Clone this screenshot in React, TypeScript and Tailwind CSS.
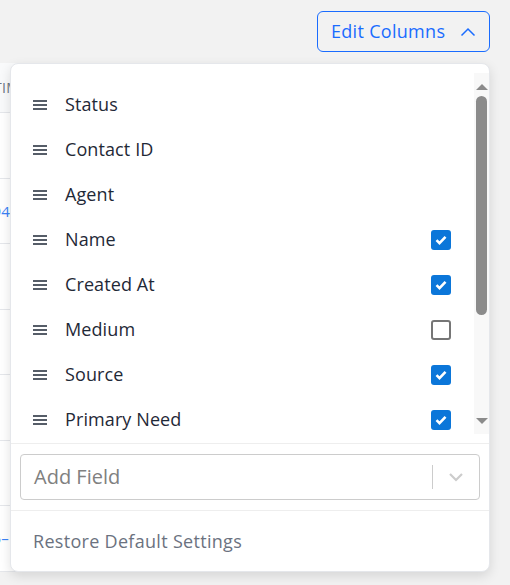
import { useState } from "react";

const columns = [
  { id: 1, title: "Status", checked: null },
  { id: 2, title: "Contact ID", checked: null },
  { id: 3, title: "Agent", checked: null },
  { id: 4, title: "Name", checked: true },
  { id: 5, title: "Created At", checked: true },
  { id: 6, title: "Medium", checked: false },
  { id: 7, title: "Source", checked: true },
  { id: 8, title: "Primary Need", checked: true },
  { id: 9, title: "Secondary Need", checked: false },
  { id: 10, title: "Phone", checked: true },
  { id: 11, title: "Email", checked: true },
  { id: 12, title: "Tags", checked: false },
];

const font = { fontFamily: "'Open Sans', 'Noto Sans', sans-serif" };

const DragIcon = () => (
  <svg width="16" height="12" viewBox="0 0 16 12" className="shrink-0">
    <path d="M1 2h14M1 6h14M1 10h14" stroke="#1f2937" strokeWidth="1.6" />
  </svg>
);

const Check = ({ checked }: { checked: boolean }) =>
  checked ? (
    <span className="flex h-5 w-5 items-center justify-center rounded-[3px] bg-[#0b76d9]">
      <svg width="14" height="14" viewBox="0 0 14 14">
        <path d="M2.5 7.2l3 3 6-6.4" fill="none" stroke="white" strokeWidth="2.6" />
      </svg>
    </span>
  ) : (
    <span className="h-5 w-5 rounded-[3px] border-2 border-[#767676] bg-white" />
  );

const Scrollbar = () => (
  <div className="flex w-[15px] shrink-0 flex-col items-center bg-[#f8f8f8]">
    <svg width="14" height="16" viewBox="0 0 14 16" className="mt-[6px]">
      <path d="M1 11L7 5l6 6z" fill="#8b8b8b" />
    </svg>
    <div className="mt-[1px] h-[219px] w-[11px] rounded-full bg-[#8b8b8b]" />
    <div className="flex-1" />
    <svg width="14" height="16" viewBox="0 0 14 16" className="mb-[5px]">
      <path d="M1 5l6 6 6-6z" fill="#8b8b8b" />
    </svg>
  </div>
);

export default function App() {
  const [items] = useState(columns);

  return (
    <div className="relative h-[585px] w-[510px] overflow-hidden bg-[#f2f2f2]" style={font}>
      <div className="flex h-[63px] items-start justify-end pr-5 pt-[11px]">
        <button className="flex h-[41px] w-[173px] items-center gap-[15px] rounded-md border border-[#1a6cff] pl-[13px] text-[18px] tracking-[0.3px] text-[#1a6cff]">
          Edit Columns
          <svg width="16" height="10" viewBox="0 0 16 10">
            <path d="M1.5 8.5L8 2l6.5 6.5" fill="none" stroke="#1a6cff" strokeWidth="1.5" />
          </svg>
        </button>
      </div>

      {/* table behind the menu */}
      <div className="ml-[-60px] w-[530px] bg-white">
        <div className="flex h-[50px] items-center border-b border-[#e5e7eb] bg-[#f9fafb] pl-[54px] text-[14px] tracking-wide text-[#6b7280]">
          TIME
        </div>
        {["", "0944", "", "", "", "", "05–"].map((t, i) => (
          <div
            key={i}
            className="flex h-[65.5px] items-center border-b border-[#e5e7eb] pl-[44px] text-[15px] text-[#3b82f6]"
          >
            {t}
          </div>
        ))}
      </div>

      {/* menu */}
      <div className="absolute left-[10px] top-[63px] flex h-[509px] w-[480px] flex-col rounded-lg border border-[#e5e7eb] bg-white shadow-[0_4px_12px_rgba(0,0,0,0.12)]">
        <div className="border-b border-[#eeeeee] py-[9px]">
          <div className="flex h-[361px]">
            <div className="flex-1 overflow-hidden pt-[9px]">
              {items.map((item) => (
                <div key={item.id} className="flex h-[45px] items-center pl-[21px] pr-[23px]">
                  <DragIcon />
                  <span className="ml-[17px] flex-1 text-[18px] tracking-[0.1px] text-[#1f2937]">
                    {item.title}
                  </span>
                  {item.checked !== null && <Check checked={item.checked} />}
                </div>
              ))}
            </div>
            <Scrollbar />
          </div>
        </div>
        <div className="border-b border-[#eeeeee] px-[9px] py-[10px]">
          <div className="flex h-[46px] items-center rounded border border-[#cccccc] pl-[13px]">
            <span className="flex-1 text-[20px] text-[#808080]">Add Field</span>
            <span className="h-[24px] w-px bg-[#cccccc]" />
            <span className="flex w-[46px] justify-center">
              <svg width="16" height="10" viewBox="0 0 16 10">
                <path d="M2 2l6 6 6-6" fill="none" stroke="#cccccc" strokeWidth="2.2" />
              </svg>
            </span>
          </div>
        </div>
        <div className="flex flex-1 items-center pl-[22px] text-[18px] font-medium tracking-[0.3px] text-[#6b7280]">
          Restore Default Settings
        </div>
      </div>
    </div>
  );
}
